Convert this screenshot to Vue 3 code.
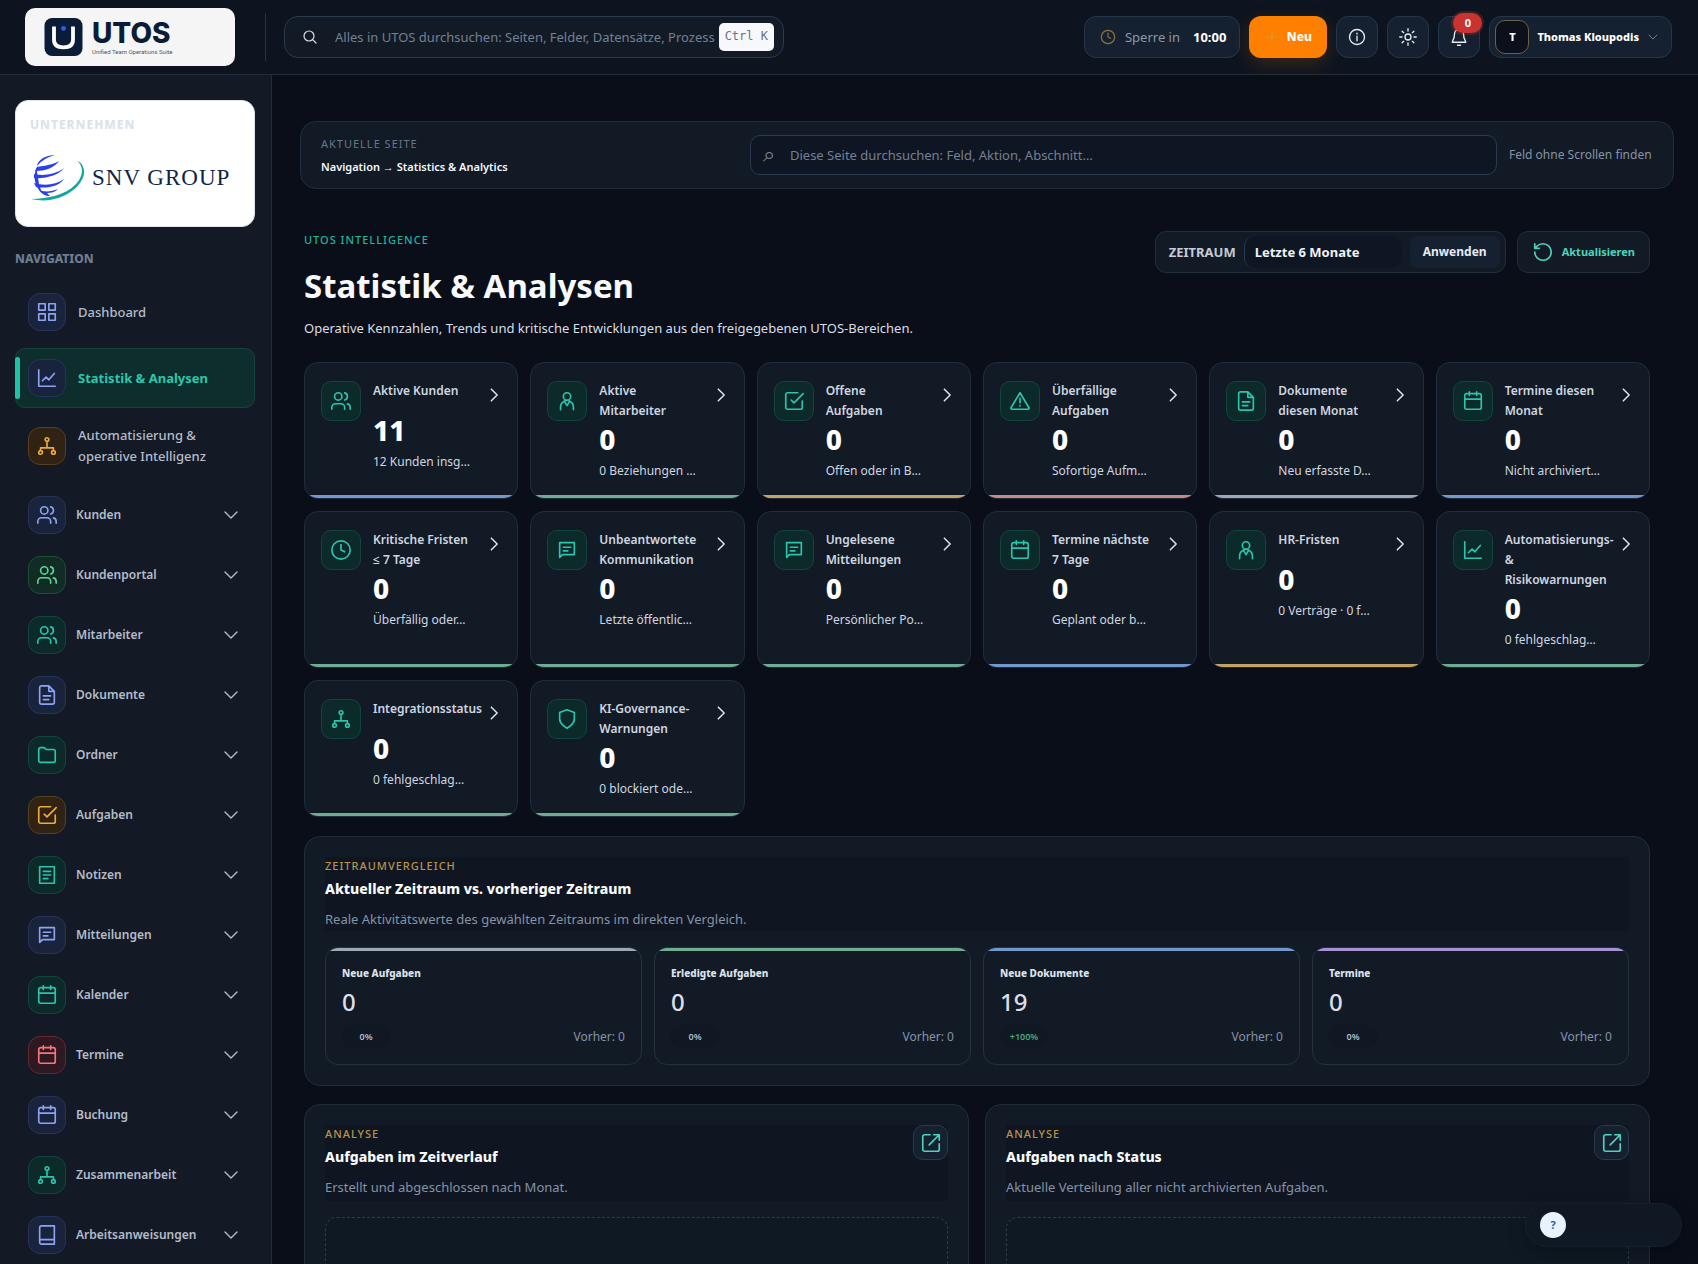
<script setup>
import { ref } from 'vue'

const circle = (x, y, r) => `M${x - r} ${y}a${r} ${r} 0 1 0 ${2 * r} 0a${r} ${r} 0 1 0 ${-2 * r} 0`

const icons = {
  grid: 'M3 3h7v7H3zM14 3h7v7h-7zM3 14h7v7H3zM14 14h7v7h-7z',
  chart: 'M3 3v18h18M7 15l4-4 3 3 6-7',
  network: `${circle(12, 5, 2)}${circle(5, 19, 2)}${circle(19, 19, 2)}M12 7v7M5 17v-3h14v3`,
  users: `${circle(9, 7, 4)}M16 21v-2a4 4 0 0 0-4-4H6a4 4 0 0 0-4 4v2M22 21v-2a4 4 0 0 0-3-3.87M16 3.13a4 4 0 0 1 0 7.75`,
  person: `${circle(12, 7, 4)}M5 21.5v-3a7 7 0 0 1 4-6.3l3 4.8 3-4.8a7 7 0 0 1 4 6.3v3M9 12.2q3-2 6 0`,
  file: 'M14 2H6a2 2 0 0 0-2 2v16a2 2 0 0 0 2 2h12a2 2 0 0 0 2-2V8zM14 2v6h6M8 13h8M8 17h6',
  folder: 'M3 6a2 2 0 0 1 2-2h4l2 2h8a2 2 0 0 1 2 2v10a2 2 0 0 1-2 2H5a2 2 0 0 1-2-2z',
  check: 'M21 12v7a2 2 0 0 1-2 2H5a2 2 0 0 1-2-2V5a2 2 0 0 1 2-2h11M9 11l3 3L22 4',
  note: 'M4 3h16v18H4zM8 8h8M8 12h8M8 16h5',
  message: 'M4 4h16v13H7l-3 3zM8 9h8M8 13h5',
  calendar: 'M5 4h14a2 2 0 0 1 2 2v13a2 2 0 0 1-2 2H5a2 2 0 0 1-2-2V6a2 2 0 0 1 2-2zM3 10h18M8 2v4M16 2v4',
  book: 'M6 2h14v20H6a2 2 0 0 1-2-2V4a2 2 0 0 1 2-2zM4 17h16',
  clock: `${circle(12, 12, 10)}M12 6v6l4 2`,
  alert: 'M12 3 2.2 19.4A1.2 1.2 0 0 0 3.2 21h17.6a1.2 1.2 0 0 0 1-1.6zM12 9v5M12 17v.5',
  shield: 'M12 22s8-4 8-10V5l-8-3-8 3v7c0 6 8 10 8 10z',
}

const pages = [
  { label: 'Dashboard', icon: 'grid', tone: 'indigo' },
  { label: 'Statistik & Analysen', icon: 'chart', tone: 'indigo', active: true },
  { label: 'Automatisierung & operative Intelligenz', icon: 'network', tone: 'amber' },
]

const groups = [
  { label: 'Kunden', icon: 'users', tone: 'indigo' },
  { label: 'Kundenportal', icon: 'users', tone: 'green' },
  { label: 'Mitarbeiter', icon: 'users', tone: 'teal' },
  { label: 'Dokumente', icon: 'file', tone: 'indigo' },
  { label: 'Ordner', icon: 'folder', tone: 'teal' },
  { label: 'Aufgaben', icon: 'check', tone: 'amber' },
  { label: 'Notizen', icon: 'note', tone: 'teal' },
  { label: 'Mitteilungen', icon: 'message', tone: 'indigo' },
  { label: 'Kalender', icon: 'calendar', tone: 'teal' },
  { label: 'Termine', icon: 'calendar', tone: 'red' },
  { label: 'Buchung', icon: 'calendar', tone: 'indigo' },
  { label: 'Zusammenarbeit', icon: 'network', tone: 'teal' },
  { label: 'Arbeitsanweisungen', icon: 'book', tone: 'indigo' },
]

const kpis = [
  { title: 'Aktive Kunden', value: 11, note: '12 Kunden insg…', icon: 'users', bar: 'blue' },
  { title: 'Aktive Mitarbeiter', value: 0, note: '0 Beziehungen …', icon: 'person', bar: 'mint' },
  { title: 'Offene Aufgaben', value: 0, note: 'Offen oder in B…', icon: 'check', bar: 'gold' },
  { title: 'Überfällige Aufgaben', value: 0, note: 'Sofortige Aufm…', icon: 'alert', bar: 'rose' },
  { title: 'Dokumente diesen Monat', value: 0, note: 'Neu erfasste D…', icon: 'file', bar: 'slate' },
  { title: 'Termine diesen Monat', value: 0, note: 'Nicht archiviert…', icon: 'calendar', bar: 'blue' },
  { title: 'Kritische Fristen ≤ 7 Tage', value: 0, note: 'Überfällig oder…', icon: 'clock', bar: 'mint' },
  { title: 'Unbeantwortete Kommunikation', value: 0, note: 'Letzte öffentlic…', icon: 'message', bar: 'mint' },
  { title: 'Ungelesene Mitteilungen', value: 0, note: 'Persönlicher Po…', icon: 'message', bar: 'mint' },
  { title: 'Termine nächste 7 Tage', value: 0, note: 'Geplant oder b…', icon: 'calendar', bar: 'blue' },
  { title: 'HR-Fristen', value: 0, note: '0 Verträge · 0 f…', icon: 'person', bar: 'gold' },
  { title: 'Automatisierungs- & Risikowarnungen', value: 0, note: '0 fehlgeschlag…', icon: 'chart', bar: 'mint' },
  { title: 'Integrationsstatus', value: 0, note: '0 fehlgeschlag…', icon: 'network', bar: 'mint' },
  { title: 'KI-Governance-Warnungen', value: 0, note: '0 blockiert ode…', icon: 'shield', bar: 'mint' },
]

const comparisons = [
  { title: 'Neue Aufgaben', value: 0, change: '0%', bar: 'slate' },
  { title: 'Erledigte Aufgaben', value: 0, change: '0%', bar: 'mint' },
  { title: 'Neue Dokumente', value: 19, change: '+100%', bar: 'blue', up: true },
  { title: 'Termine', value: 0, change: '0%', bar: 'violet' },
]

const analyses = [
  { title: 'Aufgaben im Zeitverlauf', note: 'Erstellt und abgeschlossen nach Monat.' },
  { title: 'Aufgaben nach Status', note: 'Aktuelle Verteilung aller nicht archivierten Aufgaben.' },
]

const period = ref('6')
</script>

<template>
  <div class="app">
    <header class="topbar">
      <a class="brand" href="#" aria-label="UTOS">
        <svg class="brand-mark" viewBox="0 0 40 40" aria-hidden="true">
          <rect width="40" height="40" rx="8" fill="#0b1d36" />
          <path d="M10 9v14q0 8 10 8t10-8V9" fill="none" stroke="#fff" stroke-width="4" />
          <circle cx="20" cy="11" r="2.5" fill="#2f5bea" />
        </svg>
        <span class="brand-text">
          <strong>UTOS</strong>
          <small>Unified Team Operations Suite</small>
        </span>
      </a>
      <span class="divider"></span>
      <label class="global-search">
        <svg class="line" width="16" height="16" viewBox="0 0 24 24"><path d="M3 10.5a7.5 7.5 0 1 0 15 0a7.5 7.5 0 1 0-15 0M16 16l5 5" /></svg>
        <input type="text" placeholder="Alles in UTOS durchsuchen: Seiten, Felder, Datensätze, Prozess" aria-label="Alles durchsuchen" />
        <kbd>Ctrl K</kbd>
      </label>
      <div class="actions">
        <div class="lock">
          <svg class="line" width="16" height="16" viewBox="0 0 24 24"><path :d="icons.clock" /></svg>
          <span>Sperre in</span>
          <strong>10:00</strong>
        </div>
        <button class="new" type="button">
          <svg class="line" width="14" height="14" viewBox="0 0 24 24"><path d="M12 4v16M4 12h16" /></svg>
          Neu
        </button>
        <button class="square" type="button" aria-label="Info">
          <svg class="line" width="18" height="18" viewBox="0 0 24 24"><path d="M2 12a10 10 0 1 0 20 0a10 10 0 1 0-20 0M12 11v6M12 7v1" /></svg>
        </button>
        <button class="square" type="button" aria-label="Design">
          <svg class="line" width="18" height="18" viewBox="0 0 24 24"><path d="M8 12a4 4 0 1 0 8 0a4 4 0 1 0-8 0M12 1v3M12 20v3M1 12h3M20 12h3M4.2 4.2l2 2M17.8 17.8l2 2M4.2 19.8l2-2M17.8 6.2l2-2" /></svg>
        </button>
        <button class="square" type="button" aria-label="Benachrichtigungen">
          <svg class="line" width="18" height="18" viewBox="0 0 24 24"><path d="M18 8A6 6 0 0 0 6 8c0 7-3 9-3 11h18c0-2-3-4-3-11M10 23h4" /></svg>
          <span class="badge">0</span>
        </button>
        <button class="user" type="button">
          <span class="avatar">T</span>
          Thomas Kloupodis
          <svg class="line" width="12" height="12" viewBox="0 0 24 24"><path d="M4 8l8 8 8-8" /></svg>
        </button>
      </div>
    </header>

    <div class="body">
      <aside class="sidebar">
        <section class="company">
          <h2>UNTERNEHMEN</h2>
          <div class="company-logo">
            <svg width="56" height="48" viewBox="0 0 56 48" aria-hidden="true">
              <g fill="#2b3ff0">
                <path d="M25 1C15 1 8 6 7 12c5-6 11-9 18-11z" />
                <path d="M29 7c-9 5-18 5-22 6l-2 4c10 0 19-3 24-10z" />
                <path d="M34 14C25 21 12 22 4 20l0 4c12 1 25-3 30-10z" />
                <path d="M34 25c-8 6-20 7-30 4l2 4c12 2 23-1 28-8z" />
                <path d="M28 35c-7 3-14 3-19 1 3 4 6 6 11 6l-3-3c4 0 8-1 11-4z" />
                <path d="M8 12C3 18 3 32 12 39L9 30 7 18z" />
              </g>
              <path d="M47 7c12 8 4 37-46 38 30 7 55-14 53-29-1-5-3-8-7-9z" fill="#10a89c" />
            </svg>
            <span>SNV GROUP</span>
          </div>
        </section>
        <h2 class="nav-title">NAVIGATION</h2>
        <nav>
          <a v-for="p in pages" :key="p.label" href="#" class="page" :class="{ active: p.active }">
            <span class="tile" :class="p.tone"><svg class="line" width="22" height="22" viewBox="0 0 24 24"><path :d="icons[p.icon]" /></svg></span>
            <span>{{ p.label }}</span>
          </a>
          <div class="groups">
            <button v-for="g in groups" :key="g.label" type="button" class="group">
              <span class="tile" :class="g.tone"><svg class="line" width="22" height="22" viewBox="0 0 24 24"><path :d="icons[g.icon]" /></svg></span>
              <span>{{ g.label }}</span>
              <svg class="line caret" width="18" height="18" viewBox="0 0 24 24"><path d="M4 8l8 8 8-8" /></svg>
            </button>
          </div>
        </nav>
      </aside>

      <main>
        <section class="pagebar">
          <div class="crumb">
            <span>AKTUELLE SEITE</span>
            <strong>Navigation → Statistics &amp; Analytics</strong>
          </div>
          <label class="page-search">
            <span class="glass">⌕</span>
            <input type="text" placeholder="Diese Seite durchsuchen: Feld, Aktion, Abschnitt…" aria-label="Diese Seite durchsuchen" />
          </label>
          <span class="hint">Feld ohne Scrollen finden</span>
        </section>

        <div class="content">
          <div class="heading">
            <div>
              <p class="eyebrow">UTOS INTELLIGENCE</p>
              <h1>Statistik &amp; Analysen</h1>
              <p class="lead">Operative Kennzahlen, Trends und kritische Entwicklungen aus den freigegebenen UTOS-Bereichen.</p>
            </div>
            <div class="tools">
              <form class="period" @submit.prevent>
                <label for="period">ZEITRAUM</label>
                <select id="period" v-model="period">
                  <option value="6">Letzte 6 Monate</option>
                </select>
                <button type="submit">Anwenden</button>
              </form>
              <button class="refresh" type="button">
                <svg class="line" width="22" height="22" viewBox="0 0 24 24"><path d="M3 12a9 9 0 1 0 9-9 9.75 9.75 0 0 0-6.74 2.74L3 8M3 3v5h5" /></svg>
                Aktualisieren
              </button>
            </div>
          </div>

          <div class="kpis">
            <a v-for="k in kpis" :key="k.title" href="#" class="kpi">
              <span class="tile big teal"><svg class="line" width="22" height="22" viewBox="0 0 24 24"><path :d="icons[k.icon]" /></svg></span>
              <span class="kpi-text">
                <span class="kpi-title">{{ k.title }}</span>
                <strong>{{ k.value }}</strong>
                <span class="kpi-note">{{ k.note }}</span>
              </span>
              <svg class="line arrow" width="20" height="20" viewBox="0 0 24 24"><path d="M10 5l7 7-7 7" /></svg>
              <i class="bar bottom" :class="k.bar"></i>
            </a>
          </div>

          <section class="panel">
            <header class="panel-head">
              <div>
                <p>ZEITRAUMVERGLEICH</p>
                <h2>Aktueller Zeitraum vs. vorheriger Zeitraum</h2>
                <span>Reale Aktivitätswerte des gewählten Zeitraums im direkten Vergleich.</span>
              </div>
            </header>
            <div class="compare">
              <article v-for="c in comparisons" :key="c.title">
                <i class="bar top" :class="c.bar"></i>
                <h3>{{ c.title }}</h3>
                <strong>{{ c.value }}</strong>
                <div class="compare-foot">
                  <span class="pill" :class="{ up: c.up }">{{ c.change }}</span>
                  <span>Vorher: 0</span>
                </div>
              </article>
            </div>
          </section>

          <div class="analyses">
            <section v-for="a in analyses" :key="a.title" class="panel">
              <header class="panel-head">
                <div>
                  <p>ANALYSE</p>
                  <h2>{{ a.title }}</h2>
                  <span>{{ a.note }}</span>
                </div>
                <button type="button" class="open" aria-label="Öffnen">
                  <svg class="line" width="22" height="22" viewBox="0 0 24 24"><path d="M15 3h6v6M10 14L21 3M21 13v6a2 2 0 0 1-2 2H5a2 2 0 0 1-2-2V5a2 2 0 0 1 2-2h6" /></svg>
                </button>
              </header>
              <div class="plot"></div>
            </section>
          </div>
        </div>
      </main>
    </div>

    <button class="help" type="button" aria-label="Hilfe"><span>?</span></button>
  </div>
</template>

<style>
body {
  margin: 0;
  background: #0a0e18;
}
</style>

<style scoped>
* {
  box-sizing: border-box;
}
.app {
  display: flex;
  flex-direction: column;
  height: 100vh;
  overflow: hidden;
  background: #090e18;
  color: #d9dfe8;
  font: 400 13px/20px "Noto Sans", "Open Sans", sans-serif;
}
h1, h2, h3, p {
  margin: 0;
}
a {
  color: inherit;
  text-decoration: none;
}
button, input, select {
  font: inherit;
  color: inherit;
}
button {
  padding: 0;
  border: 0;
  background: none;
}
input {
  min-width: 0;
  padding: 0;
  border: 0;
  outline: 0;
  background: none;
}
input::placeholder {
  color: #738093;
  opacity: 1;
}
.line {
  flex: none;
  fill: none;
  stroke: currentColor;
  stroke-width: 1.8;
  stroke-linecap: round;
  stroke-linejoin: round;
}

/* top bar */
.topbar {
  display: flex;
  align-items: center;
  flex: none;
  height: 75px;
  padding: 0 26px 0 25px;
  border-bottom: 1px solid #222d3b;
  background: #0d141f;
}
.brand {
  display: flex;
  align-items: center;
  gap: 8px;
  width: 210px;
  height: 58px;
  padding-left: 18px;
  border-radius: 10px;
  background: #f5f5f6;
  color: #0b1d36;
}
.brand-mark {
  width: 41px;
  height: 38px;
}
.brand-text {
  display: flex;
  flex-direction: column;
}
.brand-text strong {
  font: 800 28px/30px Inter, sans-serif;
}
.brand-text small {
  font: 400 6px/8px Roboto, sans-serif;
  color: #4c5767;
}
.divider {
  width: 1px;
  height: 48px;
  margin: 0 18px 0 30px;
  background: #263240;
}
.global-search {
  display: flex;
  align-items: center;
  width: 500px;
  height: 42px;
  padding: 0 9px 0 17px;
  border: 1px solid #2b3a4b;
  border-radius: 14px;
  background: #121a26;
}
.global-search input {
  flex: 1;
  margin-left: 17px;
}
kbd {
  padding: 4px 6px 6px;
  border-radius: 5px;
  background: #f6f8fb;
  color: #66758a;
  font: 400 12px/18px "DejaVu Sans Mono", monospace;
}
.actions {
  display: flex;
  gap: 9px;
  margin-left: auto;
}
.lock, .square, .user {
  display: flex;
  align-items: center;
  height: 42px;
  border: 1px solid #26364a;
  border-radius: 12px;
  background: #152030;
}
.lock {
  gap: 9px;
  padding: 0 13px 0 15px;
  color: #8b98a9;
}
.lock .line {
  color: #8b743e;
}
.lock strong {
  margin-left: 4px;
  color: #fff;
}
.new {
  display: flex;
  align-items: center;
  justify-content: center;
  gap: 8px;
  width: 78px;
  height: 42px;
  border-radius: 12px;
  background: #ff7f00;
  box-shadow: 0 6px 18px rgba(255, 127, 0, 0.18);
  color: #fff;
  font-size: 12px;
  font-weight: 800;
}
.new .line {
  color: #d99a3e;
}
.square {
  position: relative;
  justify-content: center;
  width: 42px;
  color: #e6ebf2;
}
.badge {
  position: absolute;
  top: -4px;
  right: -3px;
  width: 29px;
  height: 20px;
  border-radius: 10px;
  background: #c93430;
  box-shadow: 0 0 0 2px rgba(201, 52, 48, 0.25);
  color: #fff;
  font-size: 11px;
  font-weight: 700;
  line-height: 20px;
}
.user {
  gap: 8px;
  padding: 0 12px 0 5px;
  color: #fff;
  font-size: 11px;
  font-weight: 800;
}
.user .line {
  margin-left: auto;
  color: #7e8a9b;
}
.avatar {
  width: 34px;
  height: 34px;
  border: 1px solid #6d6048;
  border-radius: 10px;
  background: #0b101b;
  line-height: 32px;
}

/* sidebar */
.body {
  display: flex;
  flex: 1;
  min-height: 0;
}
.sidebar {
  flex: none;
  width: 272px;
  padding: 25px 16px 0 15px;
  border-right: 1px solid #222c3a;
  background: #131a26;
  overflow: hidden;
}
.company {
  height: 127px;
  padding: 15px 14px;
  border: 1px solid #dfe5ec;
  border-radius: 13px;
  background: #fff;
}
.company h2 {
  color: #dbe2ea;
  font-size: 12px;
  font-weight: 800;
  line-height: 18px;
  letter-spacing: 1px;
}
.company-logo {
  display: flex;
  align-items: center;
  gap: 6px;
  margin-top: 20px;
  color: #0f2547;
  font: 400 23px/28px "Liberation Serif", serif;
  letter-spacing: 1px;
  white-space: nowrap;
}
.nav-title {
  margin: 22px 0 13px;
  color: #6f7d90;
  font-size: 12px;
  font-weight: 800;
  line-height: 20px;
}
.page {
  position: relative;
  display: flex;
  align-items: center;
  gap: 12px;
  height: 60px;
  margin-bottom: 6px;
  padding: 0 12px;
  border: 1px solid transparent;
  border-radius: 10px;
  color: #b3bcc9;
  font-weight: 500;
  line-height: 21px;
}
.page:nth-child(3) {
  height: 64px;
}
.page.active {
  border-color: #15443f;
  background: #0e2e2d;
  color: #2bc8ae;
  font-weight: 700;
}
.page.active::before {
  content: "";
  position: absolute;
  top: 8px;
  bottom: 8px;
  left: -1px;
  width: 5px;
  border-radius: 3px;
  background: #1dc2a8;
}
.tile {
  display: grid;
  place-items: center;
  flex: none;
  width: 38px;
  height: 38px;
  border: 1px solid;
  border-radius: 12px;
}
.tile.big {
  width: 40px;
  height: 40px;
  border-radius: 10px;
}
.indigo { background: #19233c; border-color: #27345a; color: #8ea2f2; }
.teal { background: #0d2a2b; border-color: #124540; color: #2cc4ae; }
.green { background: #112c24; border-color: #1c4f38; color: #5ad49a; }
.amber { background: #302313; border-color: #57401b; color: #efa93c; }
.red { background: #2f181f; border-color: #66282f; color: #f4767e; }
.groups {
  display: flex;
  flex-direction: column;
  gap: 6px;
  padding-top: 4px;
}
.group {
  display: flex;
  align-items: center;
  flex: none;
  gap: 10px;
  height: 54px;
  padding: 0 15px 0 13px;
  color: #b3bcc9;
  font-size: 12px;
  font-weight: 600;
}
.caret {
  margin-left: auto;
}

/* main column */
main {
  flex: 1;
  min-width: 0;
  padding: 46px 24px 0 28px;
  overflow: hidden;
}
.pagebar {
  display: flex;
  align-items: center;
  height: 68px;
  padding: 0 18px 0 20px;
  border: 1px solid #222d3b;
  border-radius: 16px;
  background: #121a26;
}
.crumb {
  display: flex;
  flex-direction: column;
  flex: 1;
  gap: 3px;
}
.crumb span {
  color: #67768a;
  font-size: 11px;
  letter-spacing: 1px;
}
.crumb strong {
  color: #f4f7fb;
  font-size: 11px;
  font-weight: 600;
}
.page-search {
  display: flex;
  align-items: center;
  width: 56%;
  height: 40px;
  margin-right: 12px;
  padding: 0 12px;
  border: 1px solid #2a3a4c;
  border-radius: 10px;
  background: #0f1623;
}
.page-search input {
  flex: 1;
}
.glass {
  width: 27px;
  color: #738093;
  font-family: "DejaVu Sans", sans-serif;
  font-size: 22px;
}
.hint {
  width: 146px;
  color: #8593a6;
  font-size: 12px;
}
.content {
  padding: 42px 24px 0 4px;
}
.heading {
  display: flex;
  justify-content: space-between;
  align-items: flex-start;
}
.eyebrow {
  margin-top: -1px;
  color: #22b39b;
  font-size: 11px;
  font-weight: 500;
  letter-spacing: 1px;
}
h1 {
  margin-top: 13px;
  color: #f7f9fc;
  font-size: 33px;
  font-weight: 700;
  line-height: 46px;
}
.lead {
  margin: 9px 0 24px;
}
.tools {
  display: flex;
  gap: 11px;
}
.period, .refresh {
  display: flex;
  align-items: center;
  height: 42px;
  border: 1px solid #222d3b;
  border-radius: 11px;
  background: #121a26;
}
.period {
  gap: 8px;
  padding: 0 5px 0 13px;
  font-weight: 700;
}
.period label {
  color: #c3ccd8;
  font-weight: 700;
}
.period select {
  width: 158px;
  height: 32px;
  padding: 0 10px;
  border: 0;
  border-left: 1px solid #2b3a4b;
  border-radius: 10px;
  background: #0f1623;
  color: #eef2f8;
  appearance: none;
}
.period button {
  width: 90px;
  height: 32px;
  border-radius: 8px;
  background: #152030;
  color: #e6ebf3;
  font-size: 12px;
}
.refresh {
  gap: 8px;
  padding: 0 14px;
  color: #4fd3b8;
  font-size: 11px;
  font-weight: 700;
}
.kpis {
  display: grid;
  grid-template-columns: repeat(6, minmax(0, 1fr));
  gap: 12px;
  margin-bottom: 19px;
}
.kpi {
  position: relative;
  display: grid;
  grid-template-columns: 40px minmax(0, 1fr) 20px;
  column-gap: 12px;
  align-items: start;
  padding: 18px 14px 17px 16px;
  border: 1px solid #222d3b;
  border-radius: 14px;
  background: #121a26;
  overflow: hidden;
  font-size: 12px;
}
.kpi-text {
  display: flex;
  flex-direction: column;
  color: #cfd6e0;
}
.kpi-title {
  min-height: 31px;
  font-weight: 600;
}
.kpi strong {
  margin: 4px 0 8px;
  color: #fff;
  font-size: 28px;
  font-weight: 800;
  line-height: 28px;
}
.kpi-note {
  white-space: nowrap;
}
.arrow {
  margin-top: 4px;
  color: #dfe5ed;
}
.bar {
  position: absolute;
  left: 0;
  right: 0;
  height: 3px;
}
.bar.bottom { bottom: 0; }
.bar.top { top: 0; }
.blue { background: #7198cf; }
.mint { background: #6fad93; }
.gold { background: #c3a365; }
.rose { background: #c78a8a; }
.slate { background: #9ca7b7; }
.violet { background: #a793d3; }
.panel {
  padding: 20px;
  border: 1px solid #222d3b;
  border-radius: 16px;
  background: #121a26;
}
.panel-head {
  display: flex;
  justify-content: space-between;
  align-items: flex-start;
  height: 74px;
  margin-bottom: 16px;
  background: #0f1622;
}
.panel-head p {
  color: #b8934c;
  font-size: 11px;
  font-weight: 500;
  line-height: 18px;
  letter-spacing: 1px;
}
.panel-head h2 {
  margin: 3px 0 9px;
  color: #f7f9fc;
  font-size: 14px;
  font-weight: 800;
  line-height: 22px;
}
.panel-head span {
  display: block;
  color: #8593a6;
}
.compare {
  display: grid;
  grid-template-columns: repeat(4, minmax(0, 1fr));
  gap: 12px;
}
.compare article {
  position: relative;
  padding: 15px 16px 16px;
  border: 1px solid #26313f;
  border-radius: 13px;
  background: #121a26;
  overflow: hidden;
}
.compare h3 {
  color: #dde3ec;
  font-size: 10px;
  font-weight: 800;
  line-height: 20px;
}
.compare strong {
  display: block;
  margin: 4px 0 8px;
  font-size: 24px;
  font-weight: 500;
  line-height: 30px;
}
.compare-foot {
  display: flex;
  justify-content: space-between;
  align-items: center;
  color: #8593a6;
  font-size: 12px;
}
.pill {
  min-width: 48px;
  border-radius: 11px;
  background: #101824;
  color: #b3bcc9;
  font-size: 9px;
  font-weight: 600;
  line-height: 23px;
  text-align: center;
}
.pill.up {
  color: #4aa777;
}
.analyses {
  display: grid;
  grid-template-columns: repeat(2, minmax(0, 1fr));
  gap: 16px;
  margin-top: 18px;
}
.open {
  display: grid;
  place-items: center;
  width: 35px;
  height: 35px;
  border: 1px solid #2b3a4b;
  border-radius: 10px;
  background: #152030;
  color: #4fd3b8;
}
.analyses .panel-head {
  height: 76px;
}
.plot {
  height: 260px;
  border: 1px dashed #2b3b4a;
  border-radius: 12px;
  background: #0f1923;
}

/* floating help */
.help {
  position: fixed;
  right: 16px;
  bottom: 17px;
  display: flex;
  align-items: center;
  width: 157px;
  height: 44px;
  padding-left: 14px;
  border: 1px solid #14202f;
  border-radius: 22px;
  background: #101824;
  box-shadow: 0 6px 18px rgba(0, 0, 0, 0.25);
}
.help span {
  width: 26px;
  height: 26px;
  border-radius: 50%;
  background: #e9f3ff;
  color: #2563a8;
  font-size: 11px;
  font-weight: 700;
  line-height: 26px;
}
</style>
